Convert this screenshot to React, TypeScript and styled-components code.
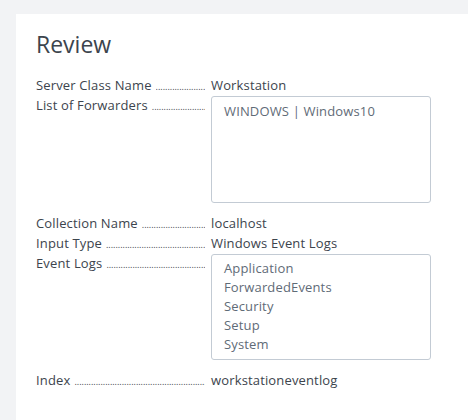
import styled, { createGlobalStyle } from 'styled-components'

const GlobalStyle = createGlobalStyle`
  html, body {
    margin: 0;
    padding: 0;
    background: #f2f3f5;
  }
  body {
    font-family: "Open Sans", "Liberation Sans", sans-serif;
    color: #3c444d;
  }
`

const Page = styled.div`
  padding: 14px 0 0 16px;
  height: 420px;
  box-sizing: border-box;
  overflow: hidden;
`

const Card = styled.section`
  background: #ffffff;
  padding: 16px 20px 40px;
  min-height: 420px;
`

const Title = styled.h2`
  margin: 0 0 18px;
  font-size: 23px;
  line-height: 28px;
  font-weight: 400;
  color: #3c444d;
`

const Row = styled.div<{ $boxed?: boolean }>`
  display: grid;
  grid-template-columns: 175px 220px;
  font-size: 13px;
  line-height: 19px;
  letter-spacing: 0.15px;
  margin-bottom: ${(p) => (p.$boxed ? '11px' : '0')};
`

const Label = styled.div`
  display: flex;
  align-items: baseline;
  padding-right: 6px;
  overflow: hidden;
  white-space: nowrap;
`

const Leader = styled.span`
  flex: 1;
  overflow: hidden;
  margin-left: 4px;
  font-size: 9px;
  letter-spacing: 0;
  color: #3c444d;
  &::after {
    content: '................................................................................................';
  }
`

const Value = styled.div`
  color: #3c444d;
`

const Box = styled.div<{ $height?: number }>`
  box-sizing: border-box;
  border: 1px solid #c3cbd4;
  border-radius: 3px;
  padding: 4px 12px 5px;
  height: ${(p) => (p.$height ? `${p.$height}px` : 'auto')};
  color: #5f6b77;
`

const BoxLine = styled.div<{ $first?: boolean }>`
  padding-top: ${(p) => (p.$first ? '1px' : '0')};
`

type Field = { label: string; value?: string; list?: string[]; height?: number }

const fields: Field[] = [
  { label: 'Server Class Name', value: 'Workstation' },
  { label: 'List of Forwarders', list: ['WINDOWS | Windows10'], height: 107 },
  { label: 'Collection Name', value: 'localhost' },
  { label: 'Input Type', value: 'Windows Event Logs' },
  {
    label: 'Event Logs',
    list: ['Application', 'ForwardedEvents', 'Security', 'Setup', 'System'],
  },
  { label: 'Index', value: 'workstationeventlog' },
]

export default function App() {
  return (
    <Page>
      <GlobalStyle />
      <Card>
        <Title>Review</Title>
        {fields.map((f) => (
          <Row key={f.label} $boxed={!!f.list}>
            <Label>
              {f.label}
              <Leader />
            </Label>
            {f.list ? (
              <Box $height={f.height}>
                {f.list.map((item, i) => (
                  <BoxLine key={item} $first={i === 0 && !!f.height}>
                    {item}
                  </BoxLine>
                ))}
              </Box>
            ) : (
              <Value>{f.value}</Value>
            )}
          </Row>
        ))}
      </Card>
    </Page>
  )
}
